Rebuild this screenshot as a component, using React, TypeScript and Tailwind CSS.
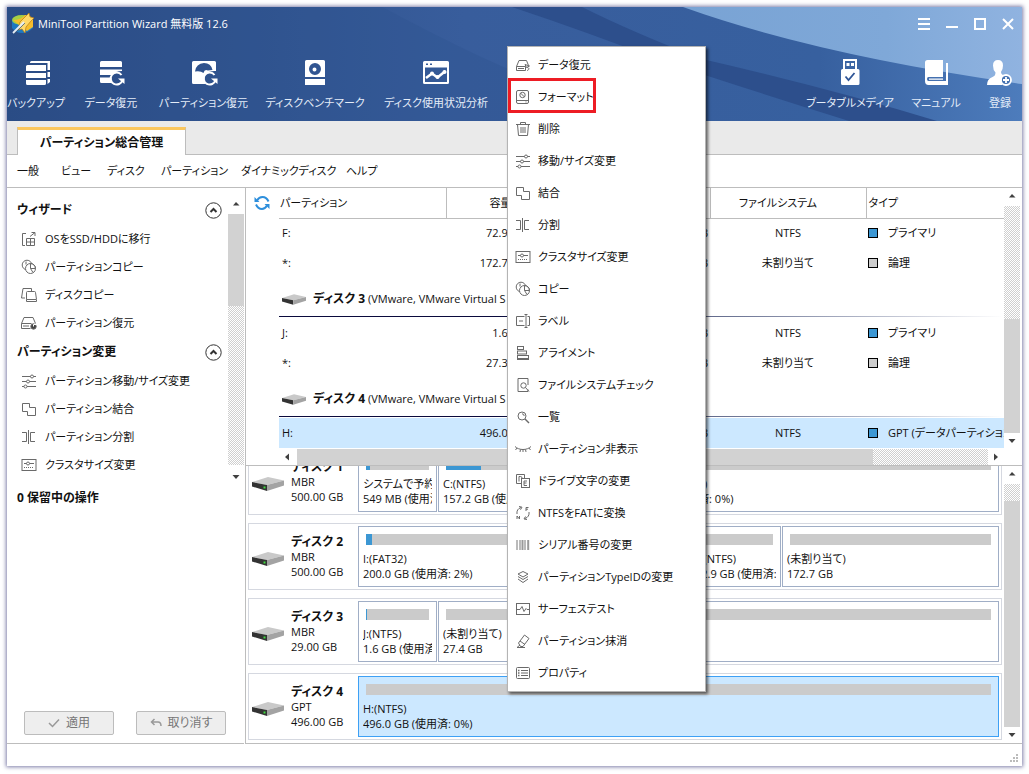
import React from 'react';

const TRACK = 'bg-[repeating-conic-gradient(#cfcfcf_0_25%,#ffffff_0_50%)] bg-[length:2px_2px]';

const glyphs: Record<string, React.ReactNode> = {
  recover: (
    <>
      <path d="M1.5 9.5 4 3.5h7.5l2 5M1.5 9.5v4h9v-4zM3 11.5h6" />
      <path d="M10 7.5 14.5 9l-3 1.5zM12 10.5c2.500 0 2.500 2.500 0 3" />
    </>
  ),
  format: (
    <>
      <rect x="1.500" y="1.500" width="12" height="13" rx="1.500" />
      <path d="M1.500 11.500h12M10.500 13h1" />
      <circle cx="7.500" cy="6" r="2.700" />
      <path d="m5.700 4.200 3.600 3.600" />
    </>
  ),
  trash: (
    <path d="M1 3.500h14M5.500 3.500v-2h5v2M2.500 3.500l1 11h9l1-11M6 6v6M8 6v6M10 6v6" />
  ),
  sliders: (
    <>
      <path d="M1 3.500h8.500M12.500 3.500H15M1 8.500h4.500M8.500 8.500H15M1 13.500h2M6 13.500h9" />
      <circle cx="11" cy="3.500" r="1.500" />
      <circle cx="7" cy="8.500" r="1.500" />
      <circle cx="4.500" cy="13.500" r="1.500" />
    </>
  ),
  merge: <path d="M1.500 2.500h7v4h6v8h-8v-4h-5z" />,
  split: <path d="M1 3.500h4.500v9H1M14 3.500H9.500v9H14M7.500 1v14" />,
  cluster: (
    <>
      <rect x="1" y="2.500" width="14" height="11" />
      <path d="M3 6.500h2.500M8.500 6.500H13" />
      <circle cx="7" cy="6.500" r="1.500" />
      <path d="M3 10.500h10" strokeDasharray="1 1" />
    </>
  ),
  copy: (
    <>
      <circle cx="6" cy="6" r="4.800" />
      <circle cx="9.500" cy="9.500" r="5" fill="#fff" />
      <path d="M9.500 9.500v-5a5 5 0 0 1 5 5zM5 2.500v3" />
      <path d="M9.500 9.500l2.500 4" />
    </>
  ),
  label: <path d="M9.500 3.500H1.500v9h8M12.500 3.500h2v9h-2M4 8h4M9.500 1.500h3M9.500 14.500h3M11 1.500v13" />,
  align: (
    <>
      <path d="M2 14.500h12" />
      <rect x="2.500" y="1.500" width="6" height="3" />
      <rect x="2.500" y="6" width="9" height="3" />
      <rect x="2.500" y="10.500" width="11" height="3" />
    </>
  ),
  check: (
    <>
      <path d="M13 8V1.500H3v13h10v-2" />
      <circle cx="8.500" cy="8.500" r="2.700" />
      <path d="m10.500 10.500 3.500 4" />
    </>
  ),
  search: (
    <>
      <circle cx="7" cy="7" r="4" />
      <path d="m10 10 4 4" strokeWidth="1.500" />
      <path d="M7 4.800a2.200 2.200 0 0 1 2.200 2.200" />
    </>
  ),
  hide: <path d="M0 5.500c2 2 5 3 8 3s6-1 8-3M2 7 .500 9M5.500 8.500 5 11M8 8.500V11M10.500 8.500l.500 2.500M14 7l1.500 2" />,
  letters: (
    <>
      <path d="M6 10.500H1.500v-9h8V5" />
      <rect x="6.500" y="5.500" width="8" height="9" />
      <path d="M4 3.500v5M4 3.500h1.500q1.500 0 1.500 1.500M12 8H9v4.500h3M9 10h2.500" />
    </>
  ),
  convert: (
    <>
      <path d="M2 9a6 6 0 0 1 4-6.500M14 7a6 6 0 0 1-4 6.500M4 1.500l3 .700-1.500 2.500M12 14.500l-3-.500 1.500-2.500" />
      <path d="M11 6V2.500h2.500M11 4.200h2M2 14v-3l2.500 3v-3" />
    </>
  ),
  barcode: (
    <>
      <path d="M2 3v10M5 3v10M10 3v10" stroke="#777" />
      <path d="M7.500 3v10M13.200 3v10" stroke="#999" strokeWidth="2" />
    </>
  ),
  layers: <path d="m8 2.500 5 2.500-5 3-5-3zM3 7.500l5 3 5-3M3 10l5 3.500 5-3.500" />,
  surface: (
    <>
      <rect x="1.500" y="2.500" width="13" height="11" />
      <path d="M1.500 8.500H5l2-3 2 5 2-3 1 1h2.500" />
    </>
  ),
  wipe: <path d="m5 12-3 2.500h8M3.500 10l6-8 4.500 3.500-6 8H5.500zM5 8l5 3.500" />,
  props: (
    <>
      <rect x="1.500" y="2.500" width="13" height="11" rx="1" />
      <path d="M6 5.500h7M6 8h7M6 10.500h7" />
      <path d="M3 5.500h1.500M3 8h1.500M3 10.500h1.500" strokeWidth="1.500" />
    </>
  ),
  migrate: (
    <>
      <path d="M5 2.500H1.500v12H4M9 5.500 14 1.500M10.500 1.500H14V5" />
      <path d="M5.500 7.500h8v7h-8zM9.500 7.500v7M5.500 11h8" />
    </>
  ),
  diskcopy: (
    <>
      <path d="M4 11H.500L2 1.500h8.500V4" />
      <path d="M5.500 12.500v-7q0-1 1-1h7q1 0 1 1l1 7v2h-10zM5.500 12.500H15" />
    </>
  ),
  drive: (
    <>
      <path d="M.500 8.500 3 2.500h9l2.500 6M.500 8.500v5h9M.500 8.500h10M2 11h6" />
      <circle cx="12.500" cy="11.500" r="2.700" fill="#444" />
      <path d="M12.500 11.500V9.500h2.500" stroke="#fff" />
    </>
  ),
};

const Glyph: React.FC<{ name: string }> = ({ name }) => (
  <svg viewBox="0 0 16 16" className="size-4 shrink-0" fill="none" stroke="#6a6a6a" strokeWidth="1" aria-hidden="true">
    {glyphs[name]}
  </svg>
);

const Refresh = () => (
  <>
    <path d="M24.500 16a6 6 0 1 0 1 5" fill="none" stroke="#fff" strokeWidth="2" />
    <path d="M21 19.500h6.500V25z" fill="#fff" stroke="none" />
  </>
);

const toolIcons: Record<string, React.ReactNode> = {
  backup: (
    <>
      <path d="M4 12h20V6H5.500Q4 6 4 7.500zM4 14h20v5H4zM4 21h20v3.500q0 1.500-1.500 1.500h-17Q4 26 4 24.500z" />
      <path d="M8 3.500q0-1.500 1.500-1.500H28v9h-2.500V4H8zM25.500 13H28v5h-2.500zM25.500 20H28v3l-2.500 2z" />
    </>
  ),
  data: (
    <>
      <path d="M3 3.500Q3 2 4.500 2h19Q25 2 25 3.500V8H3zM3 10.500h22v1.500q-7 0-9.500 4H3zM3 18.500h11.500q-.500 3 1 5.500H4.500Q3 24 3 22.500z" />
      <Refresh />
    </>
  ),
  partition: (
    <>
      <path fillRule="evenodd" d="M2 3.500Q2 2 3.500 2h21Q26 2 26 3.500V12q-11-1-11.500 8 0 3 1 5h-12Q2 25 2 23.500zM5 12.500q1-8 9-8.500 7 0 8.500 7l-4.500.500q-3.500-2-4.500 2.500-3-2.500-8.500-1.500z" />
      <Refresh />
    </>
  ),
  bench: (
    <path fillRule="evenodd" d="M4 2.500Q4 1 5.500 1h17Q24 1 24 2.500V18H4zM14 4a6 6 0 1 0 0 12 6 6 0 0 0 0-12zM13.500 8.500a2 2 0 1 1 0 4 2 2 0 0 1 0-4zM4 20h20v6H4z" />
  ),
  analysis: (
    <>
      <path fillRule="evenodd" d="M1 3.500Q1 2 2.500 2h23Q27 2 27 3.500v20q0 1.500-1.500 1.500h-23Q1 25 1 23.500zM3 8.500V23h22V8.500zM4 4.500h2v1.500H4zM8 4.500h2v1.500H8z" />
      <path d="m4 19 6-4.500 5.500 4 8-6.500" fill="none" stroke="#fff" strokeWidth="2.500" />
      <circle cx="10" cy="14.500" r="2" />
      <circle cx="15.500" cy="18" r="2" />
      <circle cx="22.500" cy="13" r="2" />
    </>
  ),
  usb: (
    <>
      <path fillRule="evenodd" d="M7 0h14v10h1q1.500 0 1.500 1.500v13q0 1.500-1.500 1.500H6.500Q5 26 5 24.500v-13Q5 10 6.500 10H7zM9 2v8h10V2zM10.500 4h3v3h-3zM15 4h3v3h-3z" />
      <path d="m9.500 17.500 3 3.500 6-7" fill="none" stroke="#2f5596" strokeWidth="1.800" />
    </>
  ),
  book: (
    <path fillRule="evenodd" d="M3 3.500Q3 1 5.500 1H21v17H6.500Q5 18 5 20t1.500 2H24V4h2v22H6.500Q3 26 3 22zM7 19.500h14v1.200H7z" />
  ),
  user: (
    <>
      <path d="M12 1q5 0 5 5.500 0 4-2 6.500 0 2.500 3.500 3.500-3.500 2-3 6.500l1 3H1q0-6 5.500-8 3-1 3-4.500Q7 11 7 6.500 7 1 12 1z" />
      <circle cx="20" cy="21" r="5" fill="#4471b1" stroke="#fff" strokeWidth="1.800" />
      <path d="M17 21h6M20 18v6" stroke="#fff" strokeWidth="1.800" />
    </>
  ),
};

interface ToolProps {
  icon: string;
  label: string;
  width: string;
}

const Tool: React.FC<ToolProps> = ({ icon, label, width }) => (
  <button className={`flex flex-col items-center gap-2 ${width}`}>
    <svg viewBox="0 0 28 28" className="size-7" fill="#fff" aria-hidden="true">
      {toolIcons[icon]}
    </svg>
    <span className="leading-4 whitespace-nowrap text-[#e4ecf8]">{label}</span>
  </button>
);

const Drive: React.FC<{ small?: boolean }> = ({ small }) => (
  <svg viewBox="0 0 32 14" className={small ? 'h-[11px] w-6 shrink-0' : 'mt-1 h-3.5 w-8 shrink-0'} aria-hidden="true">
    <path d="M0 5 16 0l16 3.500L15 8z" fill="#c9c9c9" />
    <path d="M0 5l15 3v6L0 9.500z" fill="#333" />
    <path d="m15 8 17-4.500v5L15 14z" fill="#a3a3a3" />
    {!small && <rect x="11.500" y="9.500" width="2" height="2" fill="#3fdc3f" />}
  </svg>
);

const Arrow: React.FC<{ dir: 'up' | 'down' | 'left' | 'right' }> = ({ dir }) => {
  const d = { up: 'M5 9.500 8 6l3.500 3.500z', down: 'M4.500 6h7L8 10z', left: 'M10 4.500v7L6 8z', right: 'M6 4.500v7L10 8z' }[dir];
  return (
    <svg viewBox="0 0 16 16" className="size-4 shrink-0" aria-hidden="true">
      <path d={d} fill="#404040" />
    </svg>
  );
};

const sections = [
  {
    title: 'ウィザード',
    items: [
      ['migrate', 'OSをSSD/HDDに移行'],
      ['copy', 'パーティションコピー'],
      ['diskcopy', 'ディスクコピー'],
      ['drive', 'パーティション復元'],
    ],
  },
  {
    title: 'パーティション変更',
    items: [
      ['sliders', 'パーティション移動/サイズ変更'],
      ['merge', 'パーティション結合'],
      ['split', 'パーティション分割'],
      ['cluster', 'クラスタサイズ変更'],
    ],
  },
];

const Sidebar = () => (
  <aside className="flex w-[239px] shrink-0 flex-col border-r border-[#bdbdbd]">
    <div className="flex h-[297px]">
      <div className="min-w-0 flex-1 pt-2">
        {sections.map((section) => (
          <section key={section.title} className="mb-px">
            <div className="flex h-7 items-center justify-between pr-[6px] pl-2.5">
              <h2 className="text-xs font-bold">{section.title}</h2>
              <button aria-label={section.title}>
                <svg viewBox="0 0 17 17" className="size-[17px]" fill="none" stroke="#333" aria-hidden="true">
                  <circle cx="8.500" cy="8.500" r="7.700" />
                  <path d="m5.500 10 3-3 3 3" strokeWidth="2" />
                </svg>
              </button>
            </div>
            <ul className="pt-px">
              {section.items.map(([icon, label]) => (
                <li key={label}>
                  <button className="flex h-7 items-center gap-2 pl-3.5 whitespace-nowrap">
                    <Glyph name={icon} />
                    {label}
                  </button>
                </li>
              ))}
            </ul>
          </section>
        ))}
      </div>
      <div className="mr-px flex w-4 flex-col pt-2">
        <Arrow dir="up" />
        <div className="mt-0.5 h-[92px] bg-[#d2d2d2]" />
        <div className={`flex-1 ${TRACK}`} />
        <div className="pt-1">
          <Arrow dir="down" />
        </div>
      </div>
    </div>
    <h2 className="mt-[3px] pl-2.5 text-xs leading-5 font-bold">0 保留中の操作</h2>
    <div className="mt-auto mr-px flex gap-[22px] border-b border-[#bdbdbd] pb-2 pl-[17px]">
      <button className="flex h-6 w-[90px] items-center justify-center gap-1.5 rounded-xs border border-[#bcbcbc] bg-[#eeeeee] text-xs text-[#777]">
        <svg viewBox="0 0 12 12" className="size-3" fill="none" stroke="#999" strokeWidth="1.500" aria-hidden="true">
          <path d="m1 6 3.500 3.500L11 2.500" />
        </svg>
        適用
      </button>
      <button className="flex h-6 w-[90px] items-center justify-center gap-1.5 rounded-xs border border-[#bcbcbc] bg-[#eeeeee] text-xs text-[#777]">
        <svg viewBox="0 0 12 12" className="size-3" fill="none" stroke="#999" strokeWidth="1.500" aria-hidden="true">
          <path d="M4.500 2 1.500 5l3 3M2 5h6q3 0 3 4" />
        </svg>
        取り消す
      </button>
    </div>
  </aside>
);

interface Volume {
  name: string;
  size: string;
  used: string;
  free: string;
  fs: string;
  type: string;
  primary?: boolean;
  selected?: boolean;
}

const groups: { disk?: string; volumes: Volume[] }[] = [
  {
    volumes: [
      { name: 'F:', size: '72.94 GB', used: '92.57 MB', free: '72.85 GB', fs: 'NTFS', type: 'プライマリ', primary: true },
      { name: '*:', size: '172.75 GB', used: '0 B', free: '172.75 GB', fs: '未割り当て', type: '論理' },
    ],
  },
  {
    disk: 'ディスク 3',
    volumes: [
      { name: 'J:', size: '1.60 GB', used: '13.50 MB', free: '1.59 GB', fs: 'NTFS', type: 'プライマリ', primary: true },
      { name: '*:', size: '27.39 GB', used: '0 B', free: '27.39 GB', fs: '未割り当て', type: '論理' },
    ],
  },
  {
    disk: 'ディスク 4',
    volumes: [
      { name: 'H:', size: '496.00 GB', used: '104.0 MB', free: '495.9 GB', fs: 'NTFS', type: 'GPT (データパーティション)', primary: true, selected: true },
    ],
  },
];

const PartitionTable = () => (
  <div className="flex shrink-0 border-b border-[#bdbdbd]">
    <div className="min-w-0 flex-1">
      <div className="flex">
        <button aria-label="更新" className="h-[30px] w-[33px] shrink-0 pl-2">
          <svg viewBox="0 0 16 16" className="size-4" fill="none" stroke="#2e8fdc" strokeWidth="2" aria-hidden="true">
            <path d="M3 5.500Q5 2 8.500 2q4 0 6 4.500M13 10.500q-2 3.500-5 3.500-4 0-6-4.500" />
            <path d="M.500 2v5h5zM15.500 14V9h-5z" fill="#2e8fdc" stroke="none" />
          </svg>
        </button>
        <table className="w-full min-w-0 table-fixed border-collapse whitespace-nowrap">
          <colgroup>
            <col className="w-[167px]" />
            <col className="w-[88px]" />
            <col className="w-[88px]" />
            <col className="w-[88px]" />
            <col className="w-[156px]" />
            <col />
          </colgroup>
          <thead>
            <tr className="h-[30px] border-b border-[#bdbdbd] *:border-r *:border-[#bdbdbd] *:font-normal *:last:border-r-0">
              <th className="pl-px text-left">パーティション</th>
              <th className="pr-[22px] text-right">容量</th>
              <th>使用済み</th>
              <th>未使用</th>
              <th className="pr-5">ファイルシステム</th>
              <th className="pl-0.5 text-left">タイプ</th>
            </tr>
          </thead>
          <tbody>
            {groups.map((group, i) => (
              <React.Fragment key={i}>
                {group.disk && (
                  <tr>
                    <td colSpan={6} className="h-10 align-top">
                      <div className="flex h-[38px] items-center gap-[7px] pt-1 pl-[3px]">
                        <Drive small />
                        <span>
                          <b className="text-xs">{group.disk}</b> (VMware, VMware Virtual S SAS, MBR, 29.00 GB)
                        </span>
                      </div>
                      <div className="h-px bg-linear-to-r from-[#0a0a3c] from-30% to-white" />
                    </td>
                  </tr>
                )}
                {group.volumes.map((v) => (
                  <tr key={v.name} className={v.selected ? 'h-[30px] bg-[#cce8ff]' : 'h-[30px]'}>
                    <td className="pl-[3px]">{v.name}</td>
                    <td className="pr-0.5 text-right">{v.size}</td>
                    <td className="pr-0.5 text-right">{v.used}</td>
                    <td className="pr-0.5 text-right">{v.free}</td>
                    <td className="text-center">{v.fs}</td>
                    <td className="overflow-hidden">
                      <span className="flex items-center gap-2.5 pl-0.5">
                        <span className={`size-2.5 shrink-0 border border-black ${v.primary ? 'bg-[#3c97d3]' : 'bg-[#cdcdcd]'}`} />
                        {v.type}
                      </span>
                    </td>
                  </tr>
                ))}
              </React.Fragment>
            ))}
          </tbody>
        </table>
      </div>
      <div className="mt-px flex h-4 pl-[33px]">
        <Arrow dir="left" />
        <div className="ml-0.5 flex-5 bg-[#d2d2d2]" />
        <div className={`flex-1 ${TRACK}`} />
        <Arrow dir="right" />
      </div>
    </div>
    <div className="mr-0.5 flex w-4 flex-col pb-4">
      <Arrow dir="up" />
      <div className={`mt-0.5 h-[113px] ${TRACK}`} />
      <div className="flex-1 bg-[#d2d2d2]" />
      <Arrow dir="down" />
    </div>
  </div>
);

interface Block {
  width: string;
  used: string;
  name: string;
  info: string;
  selected?: boolean;
}

const disks: { name: string; scheme: string; size: string; blocks: Block[] }[] = [
  {
    name: 'ディスク 1',
    scheme: 'MBR',
    size: '500.00 GB',
    blocks: [
      { width: 'w-[79px]', used: 'w-1', name: 'システムで予約済み(NTFS)', info: '549 MB (使用済: 5%)' },
      { width: 'w-[180px]', used: 'w-[35px]', name: 'C:(NTFS)', info: '157.2 GB (使用済: 21%)' },
      { width: 'flex-1', used: 'w-0', name: 'E:データ用(NTFS)', info: '342.2 GB (使用済: 0%)' },
    ],
  },
  {
    name: 'ディスク 2',
    scheme: 'MBR',
    size: '500.00 GB',
    blocks: [
      { width: 'w-[331px]', used: 'w-1.5', name: 'I:(FAT32)', info: '200.0 GB (使用済: 2%)' },
      { width: 'w-[91px]', used: 'w-px', name: 'F:(NTFS)', info: '72.9 GB (使用済: 0%)' },
      { width: 'flex-1', used: 'w-0', name: '(未割り当て)', info: '172.7 GB' },
    ],
  },
  {
    name: 'ディスク 3',
    scheme: 'MBR',
    size: '29.00 GB',
    blocks: [
      { width: 'w-[79px]', used: 'w-px', name: 'J:(NTFS)', info: '1.6 GB (使用済: 0%)' },
      { width: 'flex-1', used: 'w-0', name: '(未割り当て)', info: '27.4 GB' },
    ],
  },
  {
    name: 'ディスク 4',
    scheme: 'GPT',
    size: '496.00 GB',
    blocks: [{ width: 'flex-1', used: 'w-0', name: 'H:(NTFS)', info: '496.0 GB (使用済: 0%)', selected: true }],
  },
];

const DiskMap = () => (
  <div className="flex min-h-0 flex-1 border-b border-[#bdbdbd]">
    <div className="flex min-w-0 flex-1 flex-col justify-end gap-2 overflow-hidden px-0.5 pb-[3px]">
      {disks.map((disk) => (
        <div key={disk.name} className="flex h-[67px] shrink-0 border border-[#d5d8e0] p-0.5">
          <div className="flex w-[107px] shrink-0 items-center gap-[7px] pl-px">
            <Drive />
            <div className="leading-[15px] whitespace-nowrap">
              <b className="block text-xs leading-[15px]">{disk.name}</b>
              <p>{disk.scheme}</p>
              <p>{disk.size}</p>
            </div>
          </div>
          <div className="flex min-w-0 flex-1 gap-px">
            {disk.blocks.map((block) => (
              <div
                key={block.name}
                className={`overflow-hidden border pt-[7px] pl-1 leading-[15px] whitespace-nowrap ${block.width} ${
                  block.selected ? 'border-[#3da0f5] bg-[#cce8ff]' : 'border-[#a0aec6]'
                }`}
              >
                <div className="mr-[7px] mb-1.5 ml-[3px] h-[11px] bg-[#cbcbcb]">
                  <div className={`h-full bg-[#3c97d3] ${block.used}`} />
                </div>
                <div className="mr-1 overflow-hidden">
                  <p>{block.name}</p>
                  <p>{block.info}</p>
                </div>
              </div>
            ))}
          </div>
        </div>
      ))}
    </div>
    <div className="mr-0.5 flex w-4 flex-col">
      <Arrow dir="up" />
      <div className={`mt-0.5 h-[17px] ${TRACK}`} />
      <div className="flex-1 bg-[#d2d2d2]" />
      <Arrow dir="down" />
    </div>
  </div>
);

const menuItems = [
  ['recover', 'データ復元'],
  ['format', 'フォーマット'],
  ['trash', '削除'],
  ['sliders', '移動/サイズ変更'],
  ['merge', '結合'],
  ['split', '分割'],
  ['cluster', 'クラスタサイズ変更'],
  ['copy', 'コピー'],
  ['label', 'ラベル'],
  ['align', 'アライメント'],
  ['check', 'ファイルシステムチェック'],
  ['search', '一覧'],
  ['hide', 'パーティション非表示'],
  ['letters', 'ドライブ文字の変更'],
  ['convert', 'NTFSをFATに変換'],
  ['barcode', 'シリアル番号の変更'],
  ['layers', 'パーティションTypeIDの変更'],
  ['surface', 'サーフェステスト'],
  ['wipe', 'パーティション抹消'],
  ['props', 'プロパティ'],
];

const ContextMenu = () => (
  <ul className="absolute top-[39px] left-[500px] w-[199px] border border-[#b4b4b4] bg-white py-0.5 shadow-[2px_2px_3px_rgba(0,0,0,0.6)]">
    {menuItems.map(([icon, label], i) => (
      <li key={label} className="relative">
        <button className="flex h-8 w-full items-center gap-[7px] pl-[7px] whitespace-nowrap">
          <Glyph name={icon} />
          {label}
        </button>
        {i === 1 && <span className="absolute -top-[3px] left-0 h-[35px] w-[88px] border-3 border-[#ed1c24]" />}
      </li>
    ))}
  </ul>
);

const Backdrop = () => (
  <svg viewBox="0 0 1015 114" preserveAspectRatio="none" className="absolute inset-0 size-full" aria-hidden="true">
    <defs>
      <linearGradient id="base" x1="0" y1="0" x2="1" y2="0">
        <stop offset="0" stopColor="#294980" />
        <stop offset="0.450" stopColor="#385d9c" />
        <stop offset="0.800" stopColor="#37609f" />
        <stop offset="1" stopColor="#4d7cbc" />
      </linearGradient>
      <linearGradient id="sky" x1="0" y1="0" x2="1" y2="0">
        <stop offset="0" stopColor="#79a3d4" />
        <stop offset="0.600" stopColor="#7fa8d8" />
        <stop offset="1" stopColor="#90b3e0" />
      </linearGradient>
    </defs>
    <rect width="1015" height="114" fill="url(#base)" />
    <path d="M375 0Q450 40 501 62V114H0V0z" fill="#2f5290" opacity="0.350" />
    <path d="M505 0h70q50 25 120 52 130 30 235 62H842Q740 82 655 54 580 25 505 0z" fill="#2d4f8c" />
    <path d="M676 0Q810 48 1015 77V0z" fill="url(#sky)" />
  </svg>
);

const Logo = () => (
  <svg viewBox="0 0 22 22" className="size-[22px]" aria-hidden="true">
    <path d="M0 7v8q4 5 10 5t11-5V7z" fill="#1f78c0" />
    <ellipse cx="10" cy="7" rx="10" ry="5" fill="#a6cf45" />
    <path d="M1 7q8 0 12-5 5 0 8 4v8l-6 4z" fill="#f5bd2c" />
    <path d="m8 9 7-7 2-2 1 4 4 1-3 3-5 6-1 6-3-4-4 1z" fill="#ffd968" stroke="#b77b12" strokeWidth="0.700" />
    <path d="m1 20 11-11" stroke="#e6edf4" strokeWidth="1.800" />
    <path d="m2 21 11-11" stroke="#42617c" strokeWidth="0.800" />
  </svg>
);

const Header = () => (
  <header className="relative h-[114px] shrink-0 text-white">
    <Backdrop />
    <div className="relative flex h-[34px] items-center justify-between pr-2 pl-[5px]">
      <h1 className="flex items-center gap-1">
        <Logo />
        MiniTool Partition Wizard 無料版 12.6
      </h1>
      <div className="flex gap-4 *:size-3">
        <button aria-label="メニュー">
          <svg viewBox="0 0 12 12" stroke="#fff" strokeWidth="2" aria-hidden="true"><path d="M0 1h12M0 6h12M0 11h12" /></svg>
        </button>
        <button aria-label="最小化">
          <svg viewBox="0 0 12 12" stroke="#fff" strokeWidth="2" aria-hidden="true"><path d="M0 9h12" /></svg>
        </button>
        <button aria-label="最大化">
          <svg viewBox="0 0 12 12" fill="none" stroke="#fff" strokeWidth="2" aria-hidden="true"><path d="M1 1h10v10H1z" /></svg>
        </button>
        <button aria-label="閉じる">
          <svg viewBox="0 0 12 12" stroke="#fff" strokeWidth="2" aria-hidden="true"><path d="m1 1 10 10M11 1 1 11" /></svg>
        </button>
      </div>
    </div>
    <div className="relative flex justify-between pt-[18px] pr-2.5 pl-1">
      <div className="flex gap-6">
        <Tool icon="backup" label="バックアップ" width="w-[50px]" />
        <Tool icon="data" label="データ復元" width="w-[52px]" />
        <Tool icon="partition" label="パーティション復元" width="w-[85px]" />
        <Tool icon="bench" label="ディスクベンチマーク" width="w-[90px]" />
        <Tool icon="analysis" label="ディスク使用状況分析" width="w-[104px]" />
      </div>
      <div className="flex gap-6">
        <Tool icon="usb" label="ブータブルメディア" width="w-[68px]" />
        <Tool icon="book" label="マニュアル" width="w-[56px]" />
        <Tool icon="user" label="登録" width="w-6" />
      </div>
    </div>
  </header>
);

const App: React.FC = () => {
  return (
    <div
      lang="ja"
      className="h-screen min-h-[640px] bg-white p-[7px] pb-2 font-['Open_Sans','Noto_Sans_CJK_JP',sans-serif] text-[11px] text-[#111] [font-feature-settings:'palt']"
    >
      <div className="relative flex h-full flex-col bg-white shadow-[0_0_4px_1px_#7d7da8]">
        <Header />
        <div className="flex h-[34px] shrink-0 items-end border-b border-[#bdbdbd] bg-[#eaeaea] pl-2.5">
          <button className="-mb-px h-[28px] w-[169px] border-x border-t-3 border-x-[#bdbdbd] border-t-[#fbc75e] bg-white text-xs font-bold">
            パーティション総合管理
          </button>
        </div>
        <nav className="flex h-[33px] shrink-0 items-center gap-5 border-b border-[#bdbdbd] pt-px pl-2.5 whitespace-nowrap">
          <a href="#general" className="w-6">一般</a>
          <a href="#view" className="w-[26px]">ビュー</a>
          <a href="#disk" className="w-[34px]">ディスク</a>
          <a href="#partition" className="w-[60px]">パーティション</a>
          <a href="#dynamic" className="w-[85px]">ダイナミックディスク</a>
          <a href="#help">ヘルプ</a>
        </nav>
        <main className="flex min-h-0 flex-1">
          <Sidebar />
          <div className="flex min-w-0 flex-1 flex-col">
            <PartitionTable />
            <DiskMap />
          </div>
        </main>
        <footer className="flex h-[22px] shrink-0 items-end justify-end p-[3px]">
          <svg viewBox="0 0 9 9" className="size-[9px]" fill="#bbb" aria-hidden="true">
            <path d="M6 0h2v2H6zM3 3h2v2H3zM6 3h2v2H6zM0 6h2v2H0zM3 6h2v2H3zM6 6h2v2H6z" />
          </svg>
        </footer>
        <ContextMenu />
      </div>
    </div>
  );
};

export default App;
